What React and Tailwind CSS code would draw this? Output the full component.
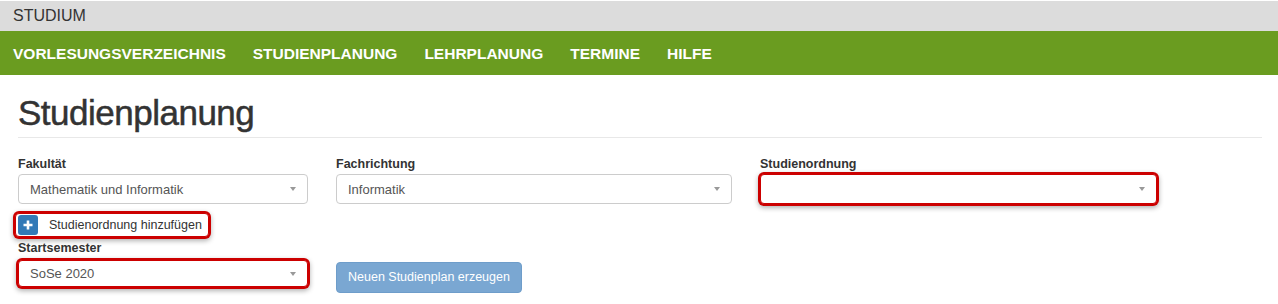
import React from "react";

function Caret() {
  return (
    <span className="absolute right-[11px] top-1/2 -translate-y-1/2 w-0 h-0 border-l-[3px] border-r-[3px] border-t-[4px] border-l-transparent border-r-transparent border-t-[#999]" />
  );
}

function Select({ value, className = "" }) {
  return (
    <div
      className={
        "relative flex items-center bg-white rounded-[4px] pl-[11px] text-[13px] text-[#555] " +
        className
      }
    >
      <span className="leading-[15px] whitespace-nowrap">{value}</span>
      <Caret />
    </div>
  );
}

function Label({ children, className = "" }) {
  return (
    <div className={"text-[12.5px] leading-[15px] font-bold text-[#333] " + className}>
      {children}
    </div>
  );
}

export default function App() {
  const nav = ["VORLESUNGSVERZEICHNIS", "STUDIENPLANUNG", "LEHRPLANUNG", "TERMINE", "HILFE"];
  return (
    <div
      className="w-[1278px] h-[304px] bg-white overflow-hidden"
      style={{ fontFamily: '"Liberation Sans", Arial, sans-serif' }}
    >
      <div className="pt-px bg-white">
        <div className="h-[30px] bg-[#dcdcdc] flex items-center px-[13px]">
          <span className="text-[16px] leading-[16px] text-[#333]">STUDIUM</span>
        </div>
      </div>
      <nav className="h-[44px] bg-[#6a9c20] flex items-center gap-[27px] px-[13px]">
        {nav.map((n) => (
          <span key={n} className="text-[15.5px] leading-[15px] font-bold text-white whitespace-nowrap">
            {n}
          </span>
        ))}
      </nav>
      <main className="pl-[18px] pr-[16px]">
        <h1 className="mt-[18px] text-[35px] leading-[40px] tracking-[-0.5px] text-[#333] [-webkit-text-stroke:0.5px_#333]">
          Studienplanung
        </h1>
        <div className="mt-[4px] h-px bg-[#e8e8e8]" />
        <div className="mt-[19px] flex gap-[28px]">
          <div className="w-[290px] flex flex-col">
            <Label className="mb-[2px]">Fakultät</Label>
            <Select value="Mathematik und Informatik" className="h-[30px] border border-[#ccc]" />
            <div className="mt-[9px] -ml-[3px] self-start w-[194px] h-[24px] flex items-center pl-[2px] bg-white rounded-[4px] border border-[#cc0000] shadow-[0_0_0_2px_#cc0000,0_2px_5px_2px_rgba(0,0,0,0.3)]">
              <span className="shrink-0 w-[20px] h-[20px] rounded-[3px] bg-[#337ab7] flex items-center justify-center">
                <svg width="10" height="10" viewBox="0 0 10 10">
                  <path d="M5 0.5V9.5M0.5 5H9.5" stroke="white" strokeWidth="2.6" />
                </svg>
              </span>
              <span className="ml-[11px] text-[12.5px] leading-[15px] text-[#333] whitespace-nowrap">
                Studienordnung hinzufügen
              </span>
            </div>
            <Label className="mt-[4px] mb-[4px]">Startsemester</Label>
            <Select
              value="SoSe 2020"
              className="h-[27px] border border-[#cc0000] shadow-[0_0_0_2px_#cc0000,0_2px_5px_2px_rgba(0,0,0,0.3)]"
            />
          </div>
          <div className="w-[396px] flex flex-col">
            <Label className="mb-[2px]">Fachrichtung</Label>
            <Select value="Informatik" className="h-[30px] border border-[#ccc]" />
            <button className="mt-[58px] self-start h-[31px] px-[11px] rounded-[4px] bg-[#7aa7d2] border border-[#6e9dca] text-white text-[12.5px] leading-[15px] whitespace-nowrap">
              Neuen Studienplan erzeugen
            </button>
          </div>
          <div className="w-[397px] flex flex-col">
            <Label className="mb-[2px]">Studienordnung</Label>
            <Select
              value=""
              className="h-[30px] border border-[#cc0000] shadow-[0_0_0_2px_#cc0000,0_2px_5px_2px_rgba(0,0,0,0.3)]"
            />
          </div>
        </div>
      </main>
    </div>
  );
}
